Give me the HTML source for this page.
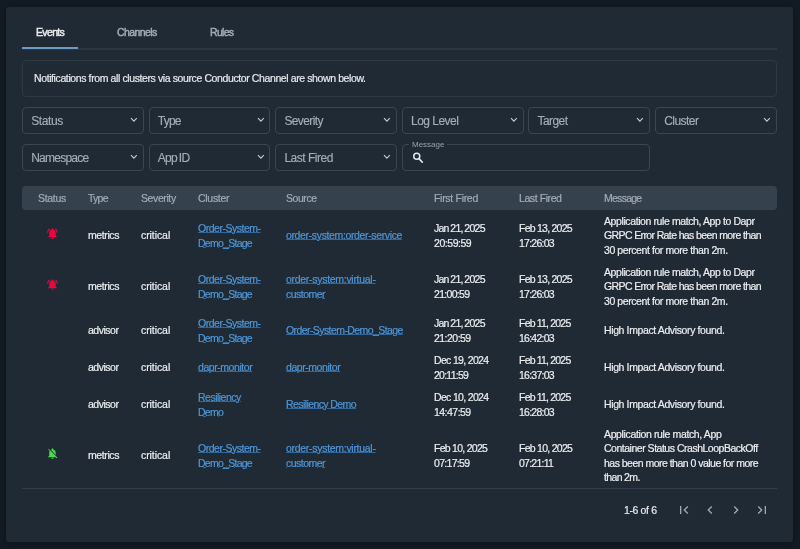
<!DOCTYPE html>
<html><head><meta charset="utf-8">
<style>
*{box-sizing:border-box;margin:0;padding:0}
html,body{width:800px;height:549px;overflow:hidden;background:#121a23;font-family:"Liberation Sans",sans-serif;color:#e6e9ec}
.card{position:absolute;left:6px;top:7px;width:787px;height:535px;background:#1f2a35;border-radius:3px;box-shadow:0 1px 4px rgba(0,0,0,0.35)}
.tab{position:absolute;top:26px;font-size:10.5px;color:#a3acb6;white-space:nowrap;-webkit-text-stroke:0.45px currentColor}
.tab.act{color:#e8ebee}
.tabline{position:absolute;left:22px;top:48px;width:755px;height:2px;background:#2b3641}
.tabul{position:absolute;left:22px;top:47px;width:55.5px;height:2px;background:#6a9ac8}
.info{position:absolute;left:22px;top:60px;width:755px;height:37px;border:1px solid #2e3944;border-radius:4px}
.info span{position:absolute;left:11px;top:11px;font-size:10.5px;color:#e6e9ec;white-space:nowrap;-webkit-text-stroke:0.2px currentColor}
.sel{position:absolute;height:27px;width:122px;border:1px solid #3b4652;border-radius:4px}
.sel span{position:absolute;left:8.2px;top:5.5px;font-size:12px;color:#a4adb7;white-space:nowrap;-webkit-text-stroke:0.15px currentColor}
.sel .chev{position:absolute;left:107px;top:9px}
.msg{position:absolute;left:402px;top:144px;width:248px;height:27px;border:1px solid #3b4652;border-radius:4px}
.msglbl{position:absolute;left:409px;top:140px;padding:0 3px;background:#1f2a35;font-size:8px;color:#98a1ab;white-space:nowrap;line-height:10px}
.search{position:absolute;left:411px;top:151px}
.thead{position:absolute;left:22px;top:186px;width:755px;height:24px;background:#35414d;border-radius:4px}
.th{position:absolute;top:192px;font-size:10.5px;color:#a3acb6;white-space:nowrap;line-height:12px;-webkit-text-stroke:0.2px currentColor}
.cell{position:absolute;display:flex;align-items:center;white-space:nowrap}
.td{font-size:10.5px;color:#eceef0;line-height:14.3px;-webkit-text-stroke:0.2px currentColor}
.lk{color:#4f97d8;text-decoration:underline;text-decoration-color:#336699;text-decoration-thickness:1px;text-underline-offset:0px}
.bline{position:absolute;left:22px;top:488px;width:755px;height:1px;background:#333e4a}
.pg{position:absolute;top:504px;left:624px;font-size:10.5px;color:#e6e9ec;white-space:nowrap;line-height:12px;-webkit-text-stroke:0.2px currentColor}
.pi{position:absolute;top:502px}
#root{position:absolute;left:0;top:0;width:800px;height:549px;will-change:transform}
</style></head><body><div id="root">
<div class="card"></div>
<div class="tab act" style="left:36px"><span style="letter-spacing:-0.650px">Events</span></div>
<div class="tab" style="left:117px"><span style="letter-spacing:-0.592px">Channels</span></div>
<div class="tab" style="left:210px"><span style="letter-spacing:-0.700px">Rules</span></div>
<div class="tabline"></div>
<div class="tabul"></div>
<div class="info"><span style="letter-spacing:-0.393px">Notifications from all clusters via source Conductor Channel are shown below.</span></div>
<div class="sel" style="left:22.0px;top:107px;width:121.8px"><span style="letter-spacing:-0.400px">Status</span><svg class="chev" width="8" height="6" viewBox="0 0 8 6"><path d="M1 1.2l2.9 2.9 2.9-2.9" stroke="#c3c9cf" stroke-width="1.2" fill="none"/></svg></div>
<div class="sel" style="left:148.6px;top:107px;width:121.8px"><span style="letter-spacing:-0.750px">Type</span><svg class="chev" width="8" height="6" viewBox="0 0 8 6"><path d="M1 1.2l2.9 2.9 2.9-2.9" stroke="#c3c9cf" stroke-width="1.2" fill="none"/></svg></div>
<div class="sel" style="left:275.2px;top:107px;width:121.8px"><span style="letter-spacing:-0.599px">Severity</span><svg class="chev" width="8" height="6" viewBox="0 0 8 6"><path d="M1 1.2l2.9 2.9 2.9-2.9" stroke="#c3c9cf" stroke-width="1.2" fill="none"/></svg></div>
<div class="sel" style="left:401.8px;top:107px;width:121.8px"><span style="letter-spacing:-0.525px">Log Level</span><svg class="chev" width="8" height="6" viewBox="0 0 8 6"><path d="M1 1.2l2.9 2.9 2.9-2.9" stroke="#c3c9cf" stroke-width="1.2" fill="none"/></svg></div>
<div class="sel" style="left:528.4px;top:107px;width:121.8px"><span style="letter-spacing:-0.590px">Target</span><svg class="chev" width="8" height="6" viewBox="0 0 8 6"><path d="M1 1.2l2.9 2.9 2.9-2.9" stroke="#c3c9cf" stroke-width="1.2" fill="none"/></svg></div>
<div class="sel" style="left:655.0px;top:107px;width:121.8px"><span style="letter-spacing:-0.536px">Cluster</span><svg class="chev" width="8" height="6" viewBox="0 0 8 6"><path d="M1 1.2l2.9 2.9 2.9-2.9" stroke="#c3c9cf" stroke-width="1.2" fill="none"/></svg></div>
<div class="sel" style="left:22.0px;top:144px;width:121.8px"><span style="letter-spacing:-0.750px">Namespace</span><svg class="chev" width="8" height="6" viewBox="0 0 8 6"><path d="M1 1.2l2.9 2.9 2.9-2.9" stroke="#c3c9cf" stroke-width="1.2" fill="none"/></svg></div>
<div class="sel" style="left:148.6px;top:144px;width:121.8px"><span style="letter-spacing:-0.750px;word-spacing:-0.60px">App ID</span><svg class="chev" width="8" height="6" viewBox="0 0 8 6"><path d="M1 1.2l2.9 2.9 2.9-2.9" stroke="#c3c9cf" stroke-width="1.2" fill="none"/></svg></div>
<div class="sel" style="left:275.2px;top:144px;width:121.8px"><span style="letter-spacing:-0.490px">Last Fired</span><svg class="chev" width="8" height="6" viewBox="0 0 8 6"><path d="M1 1.2l2.9 2.9 2.9-2.9" stroke="#c3c9cf" stroke-width="1.2" fill="none"/></svg></div>
<div class="msg"></div>
<div class="msglbl">Message</div>
<svg class="search" width="14" height="14" viewBox="0 0 14 14"><circle cx="5.75" cy="5.3" r="3" stroke="#e3e6e9" stroke-width="1.5" fill="none"/><path d="M8 7.6L11.3 11.2" stroke="#e3e6e9" stroke-width="1.7" stroke-linecap="round"/></svg>
<div class="thead"></div>
<div class="th" style="left:38px"><span style="letter-spacing:-0.300px">Status</span></div>
<div class="th" style="left:88px"><span style="letter-spacing:-0.750px">Type</span></div>
<div class="th" style="left:141px"><span style="letter-spacing:-0.400px">Severity</span></div>
<div class="th" style="left:198px"><span style="letter-spacing:-0.287px">Cluster</span></div>
<div class="th" style="left:286px"><span style="letter-spacing:-0.450px">Source</span></div>
<div class="th" style="left:434px"><span style="letter-spacing:-0.300px">First Fired</span></div>
<div class="th" style="left:519px"><span style="letter-spacing:-0.415px">Last Fired</span></div>
<div class="th" style="left:604px"><span style="letter-spacing:-0.733px">Message</span></div>
<div style="position:absolute;left:46px;top:227px;width:13px;height:13px;line-height:0"><svg width="13" height="13" viewBox="0 0 24 24"><path fill="#e8083e" d="M7.58 4.08L6.15 2.65C3.75 4.48 2.17 7.3 2.03 10.5h2c.15-2.65 1.51-4.97 3.55-6.42zm12.39 6.42h2c-.15-3.2-1.73-6.02-4.12-7.85l-1.42 1.43c2.02 1.45 3.39 3.77 3.54 6.42zM18 11c0-3.07-1.64-5.64-4.5-6.32V4c0-.83-.67-1.5-1.5-1.5s-1.5.67-1.5 1.5v.68C7.63 5.36 6 7.92 6 11v5l-2 2v1h16v-1l-2-2v-5zm-6 11c.14 0 .27-.01.4-.04.65-.14 1.18-.58 1.44-1.18.1-.24.15-.5.15-.78h-4c.01 1.1.9 2 2.01 2z"/></svg></div>
<div class="cell td" style="left:88px;top:210px;height:51px"><div><span style="letter-spacing:-0.400px">metrics</span></div></div>
<div class="cell td" style="left:141px;top:210px;height:51px"><div><span style="letter-spacing:-0.076px">critical</span></div></div>
<div class="cell td" style="left:198px;top:210px;height:51px"><div><span class="lk" style="letter-spacing:-0.483px">Order-System-</span><br><span class="lk" style="letter-spacing:-0.733px">Demo_Stage</span></div></div>
<div class="cell td" style="left:286px;top:210px;height:51px"><div><span class="lk" style="letter-spacing:-0.360px">order-system:order-service</span></div></div>
<div class="cell td" style="left:434px;top:210px;height:51px"><div><span style="letter-spacing:-0.750px;word-spacing:-0.50px">Jan 21, 2025</span><br><span style="letter-spacing:-0.452px">20:59:59</span></div></div>
<div class="cell td" style="left:519px;top:210px;height:51px"><div><span style="letter-spacing:-0.750px">Feb 13, 2025</span><br><span style="letter-spacing:-0.750px">17:26:03</span></div></div>
<div class="cell td" style="left:604px;top:210px;height:51px"><div><span style="letter-spacing:-0.400px">Application rule match, App to Dapr</span><br><span style="letter-spacing:-0.622px">GRPC Error Rate has been more than</span><br><span style="letter-spacing:-0.418px">30 percent for more than 2m.</span></div></div>
<div style="position:absolute;left:46px;top:278px;width:13px;height:13px;line-height:0"><svg width="13" height="13" viewBox="0 0 24 24"><path fill="#e8083e" d="M7.58 4.08L6.15 2.65C3.75 4.48 2.17 7.3 2.03 10.5h2c.15-2.65 1.51-4.97 3.55-6.42zm12.39 6.42h2c-.15-3.2-1.73-6.02-4.12-7.85l-1.42 1.43c2.02 1.45 3.39 3.77 3.54 6.42zM18 11c0-3.07-1.64-5.64-4.5-6.32V4c0-.83-.67-1.5-1.5-1.5s-1.5.67-1.5 1.5v.68C7.63 5.36 6 7.92 6 11v5l-2 2v1h16v-1l-2-2v-5zm-6 11c.14 0 .27-.01.4-.04.65-.14 1.18-.58 1.44-1.18.1-.24.15-.5.15-.78h-4c.01 1.1.9 2 2.01 2z"/></svg></div>
<div class="cell td" style="left:88px;top:261px;height:51px"><div><span style="letter-spacing:-0.400px">metrics</span></div></div>
<div class="cell td" style="left:141px;top:261px;height:51px"><div><span style="letter-spacing:-0.076px">critical</span></div></div>
<div class="cell td" style="left:198px;top:261px;height:51px"><div><span class="lk" style="letter-spacing:-0.483px">Order-System-</span><br><span class="lk" style="letter-spacing:-0.733px">Demo_Stage</span></div></div>
<div class="cell td" style="left:286px;top:261px;height:51px"><div><span class="lk" style="letter-spacing:-0.290px">order-system:virtual-</span><br><span class="lk" style="letter-spacing:-0.517px">customer</span></div></div>
<div class="cell td" style="left:434px;top:261px;height:51px"><div><span style="letter-spacing:-0.750px;word-spacing:-0.50px">Jan 21, 2025</span><br><span style="letter-spacing:-0.686px">21:00:59</span></div></div>
<div class="cell td" style="left:519px;top:261px;height:51px"><div><span style="letter-spacing:-0.750px">Feb 13, 2025</span><br><span style="letter-spacing:-0.750px">17:26:03</span></div></div>
<div class="cell td" style="left:604px;top:261px;height:51px"><div><span style="letter-spacing:-0.400px">Application rule match, App to Dapr</span><br><span style="letter-spacing:-0.622px">GRPC Error Rate has been more than</span><br><span style="letter-spacing:-0.418px">30 percent for more than 2m.</span></div></div>
<div class="cell td" style="left:88px;top:312px;height:37px"><div><span style="letter-spacing:-0.483px">advisor</span></div></div>
<div class="cell td" style="left:141px;top:312px;height:37px"><div><span style="letter-spacing:-0.076px">critical</span></div></div>
<div class="cell td" style="left:198px;top:312px;height:37px"><div><span class="lk" style="letter-spacing:-0.483px">Order-System-</span><br><span class="lk" style="letter-spacing:-0.733px">Demo_Stage</span></div></div>
<div class="cell td" style="left:286px;top:312px;height:37px"><div><span class="lk" style="letter-spacing:-0.580px">Order-System-Demo_Stage</span></div></div>
<div class="cell td" style="left:434px;top:312px;height:37px"><div><span style="letter-spacing:-0.750px;word-spacing:-0.50px">Jan 21, 2025</span><br><span style="letter-spacing:-0.530px">21:20:59</span></div></div>
<div class="cell td" style="left:519px;top:312px;height:37px"><div><span style="letter-spacing:-0.750px;word-spacing:-0.30px">Feb 11, 2025</span><br><span style="letter-spacing:-0.750px">16:42:03</span></div></div>
<div class="cell td" style="left:604px;top:312px;height:37px"><div><span style="letter-spacing:-0.381px">High Impact Advisory found.</span></div></div>
<div class="cell td" style="left:88px;top:349px;height:37px"><div><span style="letter-spacing:-0.483px">advisor</span></div></div>
<div class="cell td" style="left:141px;top:349px;height:37px"><div><span style="letter-spacing:-0.076px">critical</span></div></div>
<div class="cell td" style="left:198px;top:349px;height:37px"><div><span class="lk" style="letter-spacing:-0.445px">dapr-monitor</span></div></div>
<div class="cell td" style="left:286px;top:349px;height:37px"><div><span class="lk" style="letter-spacing:-0.445px">dapr-monitor</span></div></div>
<div class="cell td" style="left:434px;top:349px;height:37px"><div><span style="letter-spacing:-0.673px">Dec 19, 2024</span><br><span style="letter-spacing:-0.750px">20:11:59</span></div></div>
<div class="cell td" style="left:519px;top:349px;height:37px"><div><span style="letter-spacing:-0.750px;word-spacing:-0.30px">Feb 11, 2025</span><br><span style="letter-spacing:-0.750px">16:37:03</span></div></div>
<div class="cell td" style="left:604px;top:349px;height:37px"><div><span style="letter-spacing:-0.381px">High Impact Advisory found.</span></div></div>
<div class="cell td" style="left:88px;top:386px;height:37px"><div><span style="letter-spacing:-0.483px">advisor</span></div></div>
<div class="cell td" style="left:141px;top:386px;height:37px"><div><span style="letter-spacing:-0.076px">critical</span></div></div>
<div class="cell td" style="left:198px;top:386px;height:37px"><div><span class="lk" style="letter-spacing:-0.511px">Resiliency</span><br><span class="lk" style="letter-spacing:-0.750px">Demo</span></div></div>
<div class="cell td" style="left:286px;top:386px;height:37px"><div><span class="lk" style="letter-spacing:-0.583px">Resiliency Demo</span></div></div>
<div class="cell td" style="left:434px;top:386px;height:37px"><div><span style="letter-spacing:-0.673px">Dec 10, 2024</span><br><span style="letter-spacing:-0.530px">14:47:59</span></div></div>
<div class="cell td" style="left:519px;top:386px;height:37px"><div><span style="letter-spacing:-0.750px;word-spacing:-0.30px">Feb 11, 2025</span><br><span style="letter-spacing:-0.750px">16:28:03</span></div></div>
<div class="cell td" style="left:604px;top:386px;height:37px"><div><span style="letter-spacing:-0.381px">High Impact Advisory found.</span></div></div>
<div style="position:absolute;left:46px;top:447px;width:13px;height:13px;line-height:0"><svg width="13" height="13" viewBox="0 0 24 24"><path fill="#4ad94a" d="M20 18.69L7.84 6.14 5.27 3.49 4 4.76l2.8 2.8v.01c-.52.99-.8 2.16-.8 3.42v5l-2 2v1h13.73l2 2L21 19.72l-1-1.03zM12 22c1.11 0 2-.89 2-2h-4c0 1.11.89 2 2 2zm6-7.32V11c0-3.08-1.64-5.64-4.5-6.32V4c0-.83-.67-1.5-1.5-1.5s-1.5.67-1.5 1.5v.68c-.15.03-.29.08-.42.12-.1.03-.2.07-.3.11h-.01c-.01 0-.01 0-.02.01-.23.09-.46.2-.68.31 0 0-.01 0-.01.01L18 14.68z"/></svg></div>
<div class="cell td" style="left:88px;top:423px;height:65px"><div><span style="letter-spacing:-0.400px">metrics</span></div></div>
<div class="cell td" style="left:141px;top:423px;height:65px"><div><span style="letter-spacing:-0.076px">critical</span></div></div>
<div class="cell td" style="left:198px;top:423px;height:65px"><div><span class="lk" style="letter-spacing:-0.483px">Order-System-</span><br><span class="lk" style="letter-spacing:-0.733px">Demo_Stage</span></div></div>
<div class="cell td" style="left:286px;top:423px;height:65px"><div><span class="lk" style="letter-spacing:-0.290px">order-system:virtual-</span><br><span class="lk" style="letter-spacing:-0.517px">customer</span></div></div>
<div class="cell td" style="left:434px;top:423px;height:65px"><div><span style="letter-spacing:-0.726px">Feb 10, 2025</span><br><span style="letter-spacing:-0.686px">07:17:59</span></div></div>
<div class="cell td" style="left:519px;top:423px;height:65px"><div><span style="letter-spacing:-0.726px">Feb 10, 2025</span><br><span style="letter-spacing:-0.750px">07:21:11</span></div></div>
<div class="cell td" style="left:604px;top:423px;height:65px"><div><span style="letter-spacing:-0.362px">Application rule match, App</span><br><span style="letter-spacing:-0.483px">Container Status CrashLoopBackOff</span><br><span style="letter-spacing:-0.518px">has been more than 0 value for more</span><br><span style="letter-spacing:-0.648px">than 2m.</span></div></div>
<div class="bline"></div>
<div class="pg"><span style="letter-spacing:-0.374px">1-6 of 6</span></div>
<svg class="pi" style="left:675.6px" width="16" height="16" viewBox="0 0 24 24"><path fill="#a0a9b3" d="M18.41 16.59L13.82 12l4.59-4.59L17 6l-6 6 6 6zM6 6h2v12H6z"/></svg>
<svg class="pi" style="left:702.2px" width="16" height="16" viewBox="0 0 24 24"><path fill="#a0a9b3" d="M15.41 7.41L14 6l-6 6 6 6 1.41-1.41L10.83 12z"/></svg>
<svg class="pi" style="left:728px" width="16" height="16" viewBox="0 0 24 24"><path fill="#a0a9b3" d="M10 6L8.59 7.41 13.17 12l-4.58 4.59L10 18l6-6z"/></svg>
<svg class="pi" style="left:754.3px" width="16" height="16" viewBox="0 0 24 24"><path fill="#a0a9b3" d="M5.59 7.41L10.18 12l-4.59 4.59L7 18l6-6-6-6zM16 6h2v12h-2z"/></svg>
</div></body></html>
